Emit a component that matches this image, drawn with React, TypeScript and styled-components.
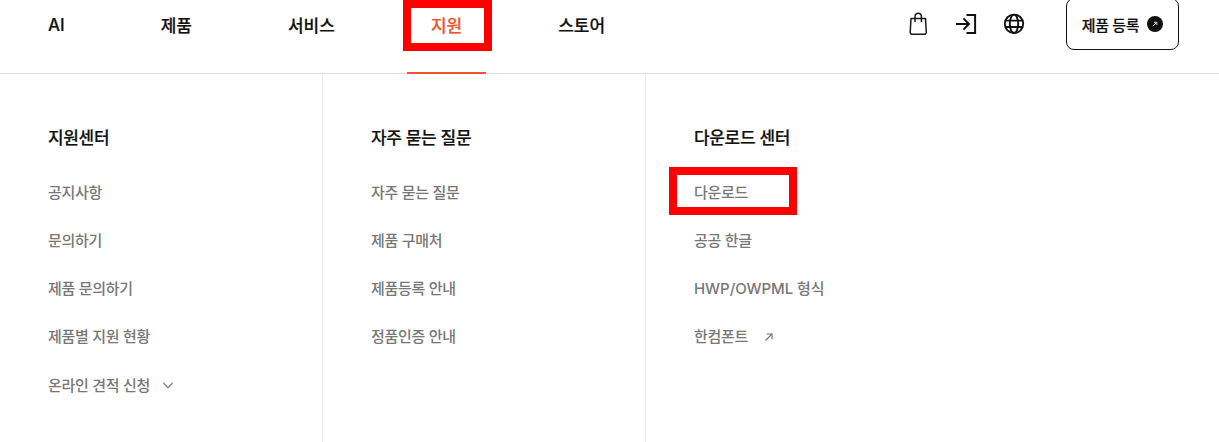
import React from 'react';
import styled, { createGlobalStyle } from 'styled-components';

const GlobalStyle = createGlobalStyle`
  html, body {
    margin: 0;
    padding: 0;
    background: #ffffff;
  }
  body {
    font-family: Inter, "Noto Sans CJK KR", sans-serif;
    overflow: hidden;
  }
  * {
    box-sizing: border-box;
  }
`;

const menus = ['AI', '제품', '서비스', '지원', '스토어'];

type LinkItem = {
  label: string;
  icon?: 'chevron' | 'arrow';
  marked?: boolean;
  latin?: boolean;
};

const columns: { title: string; links: LinkItem[] }[] = [
  {
    title: '지원센터',
    links: [
      { label: '공지사항' },
      { label: '문의하기' },
      { label: '제품 문의하기' },
      { label: '제품별 지원 현황' },
      { label: '온라인 견적 신청', icon: 'chevron' },
    ],
  },
  {
    title: '자주 묻는 질문',
    links: [
      { label: '자주 묻는 질문' },
      { label: '제품 구매처' },
      { label: '제품등록 안내' },
      { label: '정품인증 안내' },
    ],
  },
  {
    title: '다운로드 센터',
    links: [
      { label: '다운로드', marked: true },
      { label: '공공 한글' },
      { label: 'HWP/OWPML 형식', latin: true },
      { label: '한컴폰트', icon: 'arrow' },
    ],
  },
];

const App: React.FC = () => {
  return (
    <Page>
      <GlobalStyle />
      <Header>
        <Nav>
          {menus.map((menu) => (
            <NavItem key={menu} $active={menu === '지원'}>
              {menu}
              {menu === '지원' && (
                <>
                  <NavMark />
                  <NavHighlight />
                </>
              )}
            </NavItem>
          ))}
        </Nav>
        <Utils>
          <IconButton aria-label="장바구니">
            <svg width="24" height="24" viewBox="0 0 24 24" fill="none" stroke="#1a1a1a" strokeWidth="1.5" strokeLinejoin="round">
              <path d="M5 6.6h14.5l.8 13.6a2 2 0 0 1-2 2.1H6.2a2 2 0 0 1-2-2.1z" />
              <path d="M9 10V4.4a3.2 3.2 0 0 1 6.4 0V10" />
            </svg>
          </IconButton>
          <IconButton aria-label="로그인">
            <svg width="24" height="24" viewBox="0 0 24 24" fill="none" stroke="#111" strokeWidth="2">
              <path d="M12.5 3h8.6v18h-8.6" />
              <path d="M2 12h13" />
              <path d="M9.4 6.4L15 12l-5.6 5.6" />
            </svg>
          </IconButton>
          <IconButton aria-label="언어">
            <svg width="24" height="24" viewBox="0 0 24 24" fill="none" stroke="#111" strokeWidth="1.9">
              <circle cx="12" cy="11.8" r="9.2" />
              <ellipse cx="12" cy="11.8" rx="4.2" ry="9.2" />
              <path d="M3.4 8.6h17.2M3.4 15h17.2" />
            </svg>
          </IconButton>
          <RegisterButton>
            제품 등록
            <RegisterBadge>
              <svg width="8" height="8" viewBox="0 0 8 8" fill="none" stroke="#ddd" strokeWidth="1">
                <path d="M1.8 6.2L5.6 2.4" />
                <path d="M3 2.2h2.8V5" />
              </svg>
            </RegisterBadge>
          </RegisterButton>
        </Utils>
      </Header>
      <Panel>
        {columns.map((column) => (
          <Column key={column.title}>
            <ColumnTitle>{column.title}</ColumnTitle>
            <LinkList>
              {column.links.map((link) => (
                <LinkRow key={link.label} $latin={link.latin}>
                  {link.label}
                  {link.icon === 'chevron' && (
                    <ChevronWrap>
                      <svg width="12" height="12" viewBox="0 0 12 12" fill="none" stroke="#777" strokeWidth="1.1">
                        <path d="M1.4 4l4.6 4.6L10.6 4" />
                      </svg>
                    </ChevronWrap>
                  )}
                  {link.icon === 'arrow' && (
                    <ArrowWrap>
                      <svg width="8" height="8" viewBox="0 0 8 8" fill="none" stroke="#666" strokeWidth="1.1">
                        <path d="M.6 7.4L6.8 1.2" />
                        <path d="M1.8 1h5.2v5.2" />
                      </svg>
                    </ArrowWrap>
                  )}
                  {link.marked && <LinkHighlight />}
                </LinkRow>
              ))}
            </LinkList>
          </Column>
        ))}
      </Panel>
    </Page>
  );
};

export default App;

const Page = styled.div`
  width: 1219px;
  height: 442px;
  overflow: hidden;
  background: #ffffff;
`;

const Header = styled.header`
  height: 74px;
  display: flex;
  justify-content: space-between;
  padding: 0 40px 0 24px;
  border-bottom: 1px solid #dcdcdc;
`;

const Nav = styled.nav`
  display: flex;
  gap: 48px;
`;

const NavItem = styled.div<{ $active?: boolean }>`
  position: relative;
  height: 74px;
  padding: 0 24px 25px;
  display: flex;
  align-items: center;
  font-size: 17px;
  font-weight: 500;
  -webkit-text-stroke: 0.2px currentColor;
  color: ${(p) => (p.$active ? '#f0532d' : '#111111')};
`;

const NavMark = styled.span`
  position: absolute;
  left: 0;
  right: 0;
  bottom: 0;
  height: 2px;
  background: #f0532d;
`;

const NavHighlight = styled.span`
  position: absolute;
  left: -4px;
  right: -6px;
  top: 0;
  height: 51px;
  border: 8px solid #ff0000;
`;

const Utils = styled.div`
  display: flex;
  align-items: flex-start;
  padding-top: 12px;
  gap: 24px;
`;

const IconButton = styled.div`
  width: 24px;
  height: 24px;
  display: flex;
  align-items: center;
  justify-content: center;
`;

const RegisterButton = styled.div`
  margin: -14px 0 0 16px;
  width: 113px;
  height: 52px;
  display: flex;
  align-items: center;
  justify-content: center;
  gap: 8px;
  font-size: 15px;
  font-weight: 500;
  -webkit-text-stroke: 0.2px currentColor;
  letter-spacing: -0.02em;
  color: #111111;
  border: 1px solid #111111;
  border-radius: 8px;
`;

const RegisterBadge = styled.span`
  width: 16px;
  height: 16px;
  border-radius: 50%;
  background: #111111;
  display: flex;
  align-items: center;
  justify-content: center;
`;

const Panel = styled.div`
  display: flex;
  height: 368px;
`;

const Column = styled.section`
  width: 323px;
  padding: 50px 0 0 48px;
  border-right: 1px solid #eeeeee;

  &:last-child {
    border-right: none;
  }
`;

const ColumnTitle = styled.h3`
  margin: 0 0 27px;
  font-size: 17px;
  line-height: 28px;
  font-weight: 500;
  -webkit-text-stroke: 0.2px currentColor;
  letter-spacing: -0.02em;
  color: #111111;
`;

const LinkList = styled.ul`
  margin: 0;
  padding: 0;
  list-style: none;
  display: flex;
  flex-direction: column;
  gap: 24px;
`;

const LinkRow = styled.li<{ $latin?: boolean }>`
  position: relative;
  height: 24px;
  display: flex;
  align-items: center;
  font-size: 15px;
  font-weight: 500;
  letter-spacing: ${(p) => (p.$latin ? '-0.06px' : '-0.3px')};
  color: #777777;

  &:nth-child(5) {
    top: 1px;
  }
`;

const ChevronWrap = styled.span`
  margin: 2px 0 0 12px;
  display: flex;
`;

const ArrowWrap = styled.span`
  margin: 4px 0 0 17px;
  display: flex;
`;

const LinkHighlight = styled.span`
  position: absolute;
  left: -25px;
  top: -12px;
  width: 128px;
  height: 48px;
  border: 8px solid #ff0000;
`;
